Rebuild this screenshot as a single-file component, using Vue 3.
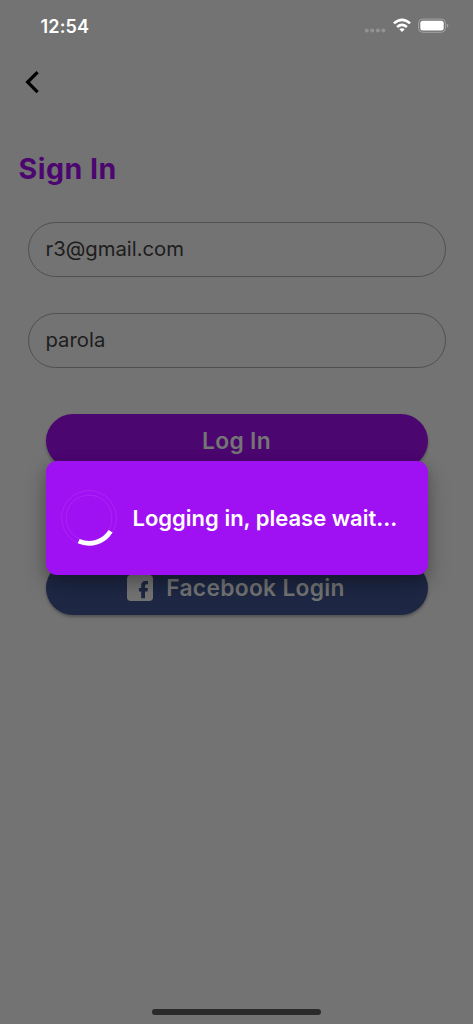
<script setup>
const fields = [
  { name: 'email', value: 'r3@gmail.com' },
  { name: 'password', value: 'parola' },
]
</script>

<template>
  <div class="screen">
    <header class="status">
      <span class="time">12:54</span>
      <svg class="indicators" width="84" height="18" viewBox="0 0 84 18">
        <g fill="#929292">
          <circle cx="2.8" cy="13.4" r="2" /><circle cx="8.3" cy="13.4" r="2" />
          <circle cx="13.9" cy="13.4" r="2" /><circle cx="19.4" cy="13.4" r="2" />
        </g>
        <g fill="none" stroke="#fff" stroke-width="2.6">
          <path d="M29.9 6.4Q38 -.8 46.1 6.4" />
          <path d="M33.1 9.9Q38 5.7 42.9 9.9" />
        </g>
        <path d="M35.3 12.3Q38 10.2 40.7 12.3L38 15.1Z" fill="#fff" />
        <rect x="54.6" y="2.1" width="26.8" height="13.2" rx="4" fill="none" stroke="#a3a3a3" />
        <rect x="56.3" y="3.8" width="23.4" height="9.8" rx="2.5" fill="#fff" />
        <path d="M82.8 6.7q1.6 .6 1.6 2t-1.6 2z" fill="#a3a3a3" />
      </svg>
    </header>

    <nav class="nav">
      <svg width="16" height="24" viewBox="0 0 16 24">
        <path d="M13.6 2.1L3.7 12.1L13.6 22.1" fill="none" stroke="#000" stroke-width="3.3" />
      </svg>
    </nav>

    <main class="content">
      <h1><span>Sign In</span></h1>
      <div class="fields">
        <div v-for="field in fields" :key="field.name" class="field" :class="field.name">
          <span>{{ field.value }}</span>
        </div>
      </div>
      <div class="actions">
        <div class="button login"><span>Log In</span></div>
        <div class="button facebook">
          <svg width="26" height="26" viewBox="0 0 26 26">
            <rect width="26" height="26" rx="3.8" fill="#757575" />
            <path d="M14.2 23.3V16.5H12V13.1H14.2V10.4Q14.2 5.9 18.5 5.9H21V9.2H19.5Q18 9.2 18 10.7V13.1H21L20.5 16.5H18V23.3Z" fill="#1e2845" />
          </svg>
          <span>Facebook Login</span>
        </div>
      </div>
    </main>

    <div class="overlay">
      <div class="dialog">
        <svg class="spinner" width="58" height="58" viewBox="0 0 58 58">
          <g fill="none" stroke="#b94af8" stroke-width=".6" opacity=".65">
            <circle cx="29" cy="29" r="27.4" /><circle cx="29" cy="29" r="22.9" />
          </g>
          <path d="M50.6 42.3A25.35 25.35 0 0 1 18.7 52.2" fill="none" stroke="#fff" stroke-width="4.7" />
        </svg>
        <span>Logging in, please wait...</span>
      </div>
    </div>
    <div class="home"></div>
  </div>
</template>

<style>
body { margin: 0; background: #737373; }
</style>

<style scoped>
.screen {
  position: relative;
  display: flex;
  flex-direction: column;
  width: 473px;
  height: 1024px;
  box-sizing: border-box;
  overflow: hidden;
  background: #737373;
  font-family: Inter, "Liberation Sans", sans-serif;
}
.status {
  display: flex;
  justify-content: space-between;
  box-sizing: border-box;
  height: 54px;
  padding: 15px 25px 0 40.5px;
}
.time { color: #fff; font-size: 18px; line-height: 23px; font-weight: 600; letter-spacing: .15px; }
.indicators { margin-top: 2px; overflow: visible; }
.nav { height: 56px; padding: 16px 0 0 24px; box-sizing: border-box; }
.nav svg { display: block; }
.content { padding: 41px 27.5px 0; }
h1 {
  margin: 0 0 0 -9px;
  color: #4b0670;
  font-size: 28.5px;
  line-height: 36px;
  font-weight: 700;
  letter-spacing: .5px;
}
.fields { display: flex; flex-direction: column; gap: 36px; margin-top: 35px; }
.field {
  display: flex;
  align-items: center;
  height: 55.2px;
  box-sizing: border-box;
  padding: 0 17px 2px;
  border: 1.4px solid #505050;
  border-radius: 28px;
  color: #1d1d1d;
  font-size: 20.3px;
}
.actions { display: flex; flex-direction: column; gap: 92.5px; margin: 45.4px 18px 0; }
.button {
  display: flex;
  align-items: center;
  justify-content: center;
  height: 54.4px;
  border-radius: 28px;
  color: #757575;
  font-size: 22.8px;
  font-weight: 600;
  letter-spacing: .3px;
  box-shadow: 0 2px 3px rgba(0, 0, 0, .3);
}
.login { background: #4b0670; }
.facebook { gap: 13px; background: #1e2845; }
.facebook svg { margin-left: -1px; }
.overlay {
  position: absolute;
  inset: 0;
  display: flex;
  align-items: center;
  padding: 11px 45.5px 0;
}
.dialog {
  display: flex;
  align-items: center;
  gap: 15px;
  flex: 1;
  height: 114px;
  box-sizing: border-box;
  padding-left: 14px;
  border-radius: 11px;
  background: #9f10f3;
  color: #fff;
  font-size: 22px;
  font-weight: 600;
  white-space: nowrap;
  box-shadow: 0 11px 22px 1px rgba(0, 0, 0, .22), 0 4px 12px rgba(0, 0, 0, .16);
}
.home {
  width: 169px;
  height: 6px;
  margin: auto auto 9px;
  border-radius: 3px;
  background: #2a2a2a;
}
</style>
